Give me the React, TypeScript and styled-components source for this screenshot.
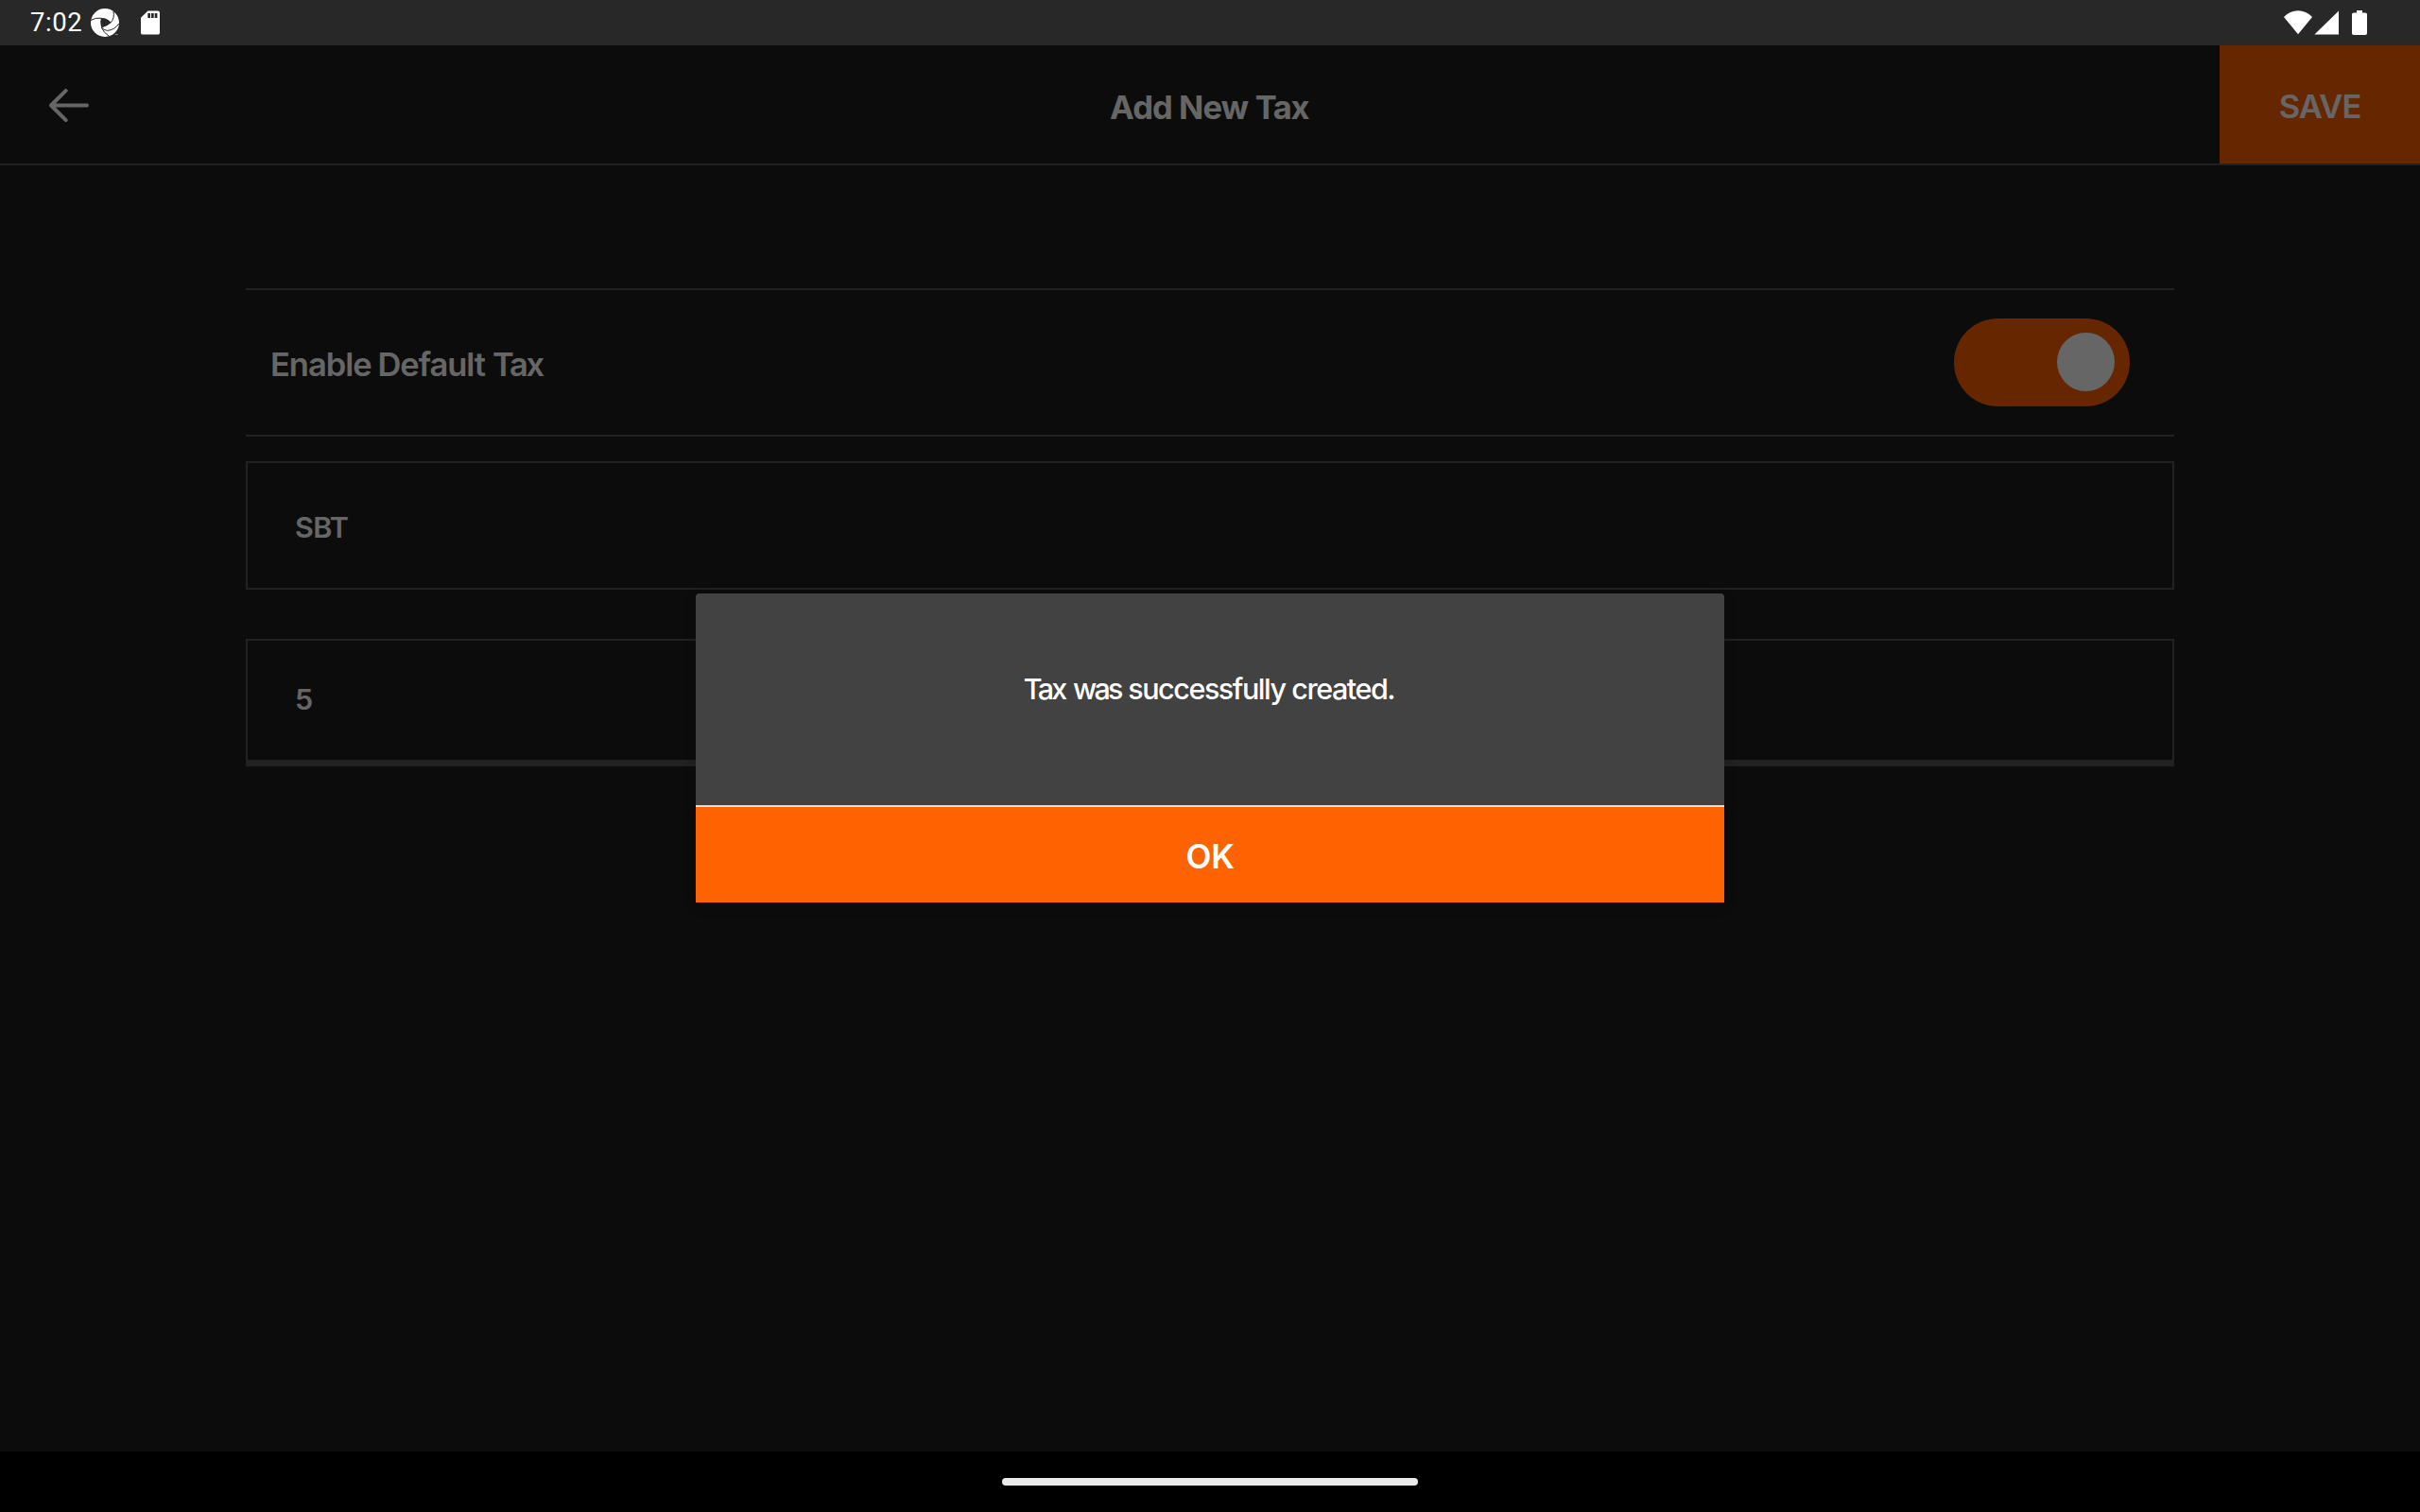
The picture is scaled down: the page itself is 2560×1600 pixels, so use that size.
import React from "react";
import styled, { createGlobalStyle } from "styled-components";

const ORANGE = "#ff6200";
const LINE = "#535353";

const GlobalStyle = createGlobalStyle`
  *, *::before, *::after { box-sizing: border-box; }
  body { margin: 0; background: #000; }
`;

const Device = styled.div`
  display: flex;
  flex-direction: column;
  width: 2560px;
  height: 1600px;
  overflow: hidden;
  background: #000;
  color: #fff;
  font-family: Inter, "Liberation Sans", sans-serif;
`;

const StatusBar = styled.div`
  display: flex;
  flex: none;
  align-items: center;
  justify-content: space-between;
  height: 48px;
  padding: 0 56px 0 32px;
  background: #282828;
`;

const StatusGroup = styled.div`
  display: flex;
  align-items: center;
`;

const Clock = styled.span`
  width: 63px;
  font: 400 27.5px/48px Roboto, sans-serif;
  letter-spacing: 0.6px;
`;

const StatusIcon = styled.svg<{ $gap?: number }>`
  display: block;
  flex: none;
  margin-left: ${(p) => p.$gap ?? 0}px;
`;

const Screen = styled.div`
  position: relative;
  flex: 1;
  display: flex;
  flex-direction: column;
  background: #1e1e1e;
`;

const Header = styled.header`
  display: grid;
  grid-template-columns: 212px 1fr 212px;
  height: 127px;
  border-bottom: 2px solid ${LINE};
`;

const BackButton = styled.button`
  display: flex;
  align-items: center;
  padding: 0 0 0 48px;
  border: 0;
  background: none;
  color: #fff;
`;

/* Words that start with a wide cap or diagonal are set tighter than the rest of the line. */
const Kern = styled.span<{ $spacing: number; $word?: number; $before?: number; $after?: number }>`
  margin-left: ${(p) => p.$before ?? 0}px;
  margin-right: ${(p) => p.$after ?? 0}px;
  letter-spacing: ${(p) => p.$spacing}px;
  word-spacing: ${(p) => p.$word ?? 0}px;
`;

const Title = styled.h1`
  margin: 0;
  padding: 7px 2px 0 0;
  font-size: 34.5px;
  font-weight: 700;
  line-height: 118px;
  letter-spacing: -0.8px;
  word-spacing: -0.5px;
  text-align: center;
`;

const SaveButton = styled.button`
  padding: 4px 0 0;
  border: 0;
  background: ${ORANGE};
  color: #fff;
  font: 600 34.5px/40px Inter, sans-serif;
  letter-spacing: -1px;
`;

const Form = styled.main`
  display: flex;
  flex-direction: column;
  margin: 130px 260px 0;
`;

const ToggleRow = styled.div`
  display: flex;
  align-items: center;
  justify-content: space-between;
  height: 157px;
  padding: 0 47px 0 26px;
  border: solid ${LINE};
  border-width: 2px 0;
`;

const Label = styled.span`
  padding-top: 4px;
  font-size: 34.5px;
  font-weight: 600;
  line-height: 40px;
  letter-spacing: -1.04px;
  word-spacing: -0.7px;
`;

const Toggle = styled.div`
  display: flex;
  align-items: flex-start;
  justify-content: flex-end;
  width: 186px;
  height: 93px;
  padding: 15px 16px 0 0;
  border-radius: 47px;
  background: ${ORANGE};
`;

const Knob = styled.div`
  width: 61px;
  height: 62px;
  border-radius: 50%;
  background: #fff;
`;

const Field = styled.div<{ $focused?: boolean }>`
  display: flex;
  align-items: center;
  height: ${(p) => (p.$focused ? 135 : 136)}px;
  margin-top: ${(p) => (p.$focused ? 52 : 26)}px;
  padding: ${(p) => (p.$focused ? "0 50px 2px" : "4px 50px 0")};
  border: 2px solid ${LINE};
  border-bottom-width: ${(p) => (p.$focused ? 7 : 2)}px;
  font-size: 30.5px;
  font-weight: 600;
  line-height: 40px;
  letter-spacing: -0.7px;
`;

const Scrim = styled.div`
  position: absolute;
  inset: 0;
  display: flex;
  align-items: flex-start;
  justify-content: center;
  padding-top: 580px;
  background: rgba(0, 0, 0, 0.6);
`;

const Dialog = styled.div`
  display: flex;
  flex-direction: column;
  width: 1088px;
  height: 327px;
  overflow: hidden;
  border-radius: 4px 4px 0 0;
  background: #424242;
  box-shadow: 0 4px 16px rgba(0, 0, 0, 0.1);
`;

const Message = styled.p`
  flex: 1;
  margin: 0;
  padding: 81px 2px 0 0;
  font-size: 30.5px;
  font-weight: 500;
  line-height: 40px;
  letter-spacing: -1.45px;
  text-align: center;
`;

const OkButton = styled.button`
  height: 103px;
  padding: 2px 0 0;
  border: 0;
  border-top: 2px solid #dedede;
  background: ${ORANGE};
  color: #fff;
  font: 600 35px/40px Inter, sans-serif;
  letter-spacing: -0.3px;
`;

const NavBar = styled.div`
  display: flex;
  flex: none;
  align-items: center;
  justify-content: center;
  height: 64px;
  background: #000;
`;

const NavPill = styled.div`
  width: 440px;
  height: 8px;
  border-radius: 4px;
  background: #ebebeb;
`;

const ApertureIcon = () => (
  <StatusIcon width="32" height="32" viewBox="0 0 32 32">
    <circle cx="16" cy="16" r="15" fill="#fff" />
    <g fill="none" stroke="#282828" strokeWidth="1">
      <path d="M1 13.4Q6 10.6 12 11.2" />
      <path d="M25 4Q26.5 11 22.3 15.8" />
      <path d="M12.4 21.2Q14.8 27 20.6 30.4" />
      <path d="M30.8 17Q26 23.8 18.6 24.4Q15 24 12.4 21.2" />
    </g>
    <path d="M12 11Q18.4 10.8 22.6 15.9Q18.4 20 12.5 21.4Q10.4 16 12 11Z" fill="#282828" />
    <path d="M26.6 28.4h3.2" stroke="#858585" strokeWidth="1" />
  </StatusIcon>
);

const SdCardIcon = () => (
  <StatusIcon $gap={22} width="20" height="26" viewBox="0 0 20 26">
    <path d="M7.4 0.4H17.8Q20 0.4 20 2.6V23.4Q20 25.6 17.8 25.6H2.2Q0 25.6 0 23.4V7.8Z" fill="#fff" />
    <path d="M7.3 3h2.7v5H7.3zM11 3h2.7v5H11zM14.7 3h2.7v5h-2.7z" fill="#282828" />
  </StatusIcon>
);

const WifiIcon = () => (
  <StatusIcon width="30" height="26" viewBox="0 0 30 26">
    <path d="M15 25.3L0 7Q6.4 0.3 15 0.3T30 7Z" fill="#fff" />
  </StatusIcon>
);

const SignalIcon = () => (
  <StatusIcon $gap={2} width="26" height="26" viewBox="0 0 26 26">
    <path d="M0.4 25.6H26V0.4Z" fill="#fff" />
  </StatusIcon>
);

const BatteryIcon = () => (
  <StatusIcon $gap={14} width="16" height="26" viewBox="0 0 16 26">
    <path
      d="M5 0H11V2.4H14.2Q16 2.4 16 4.2V24.2Q16 26 14.2 26H1.8Q0 26 0 24.2V4.2Q0 2.4 1.8 2.4H5Z"
      fill="#fff"
    />
  </StatusIcon>
);

const BackArrow = () => (
  <svg width="48" height="40" viewBox="0 0 48 40">
    <path
      d="M21.7 4.8L6 20.5L21.7 36.2M6 20.5H44"
      fill="none"
      stroke="currentColor"
      strokeWidth="4"
      strokeLinecap="round"
      strokeLinejoin="round"
    />
  </svg>
);

export default function App() {
  return (
    <Device>
      <GlobalStyle />
      <StatusBar>
        <StatusGroup>
          <Clock>7:02</Clock>
          <ApertureIcon />
          <SdCardIcon />
        </StatusGroup>
        <StatusGroup>
          <WifiIcon />
          <SignalIcon />
          <BatteryIcon />
        </StatusGroup>
      </StatusBar>
      <Screen>
        <Header>
          <BackButton aria-label="Back">
            <BackArrow />
          </BackButton>
          <Title>
            Add New <Kern $spacing={-1.4} $before={0.6}>Tax</Kern>
          </Title>
          <SaveButton>SAVE</SaveButton>
        </Header>
        <Form>
          <ToggleRow>
            <Label>
              Enable Default <Kern $spacing={-2.3} $before={1.1}>Tax</Kern>
            </Label>
            <Toggle role="switch" aria-checked="true">
              <Knob />
            </Toggle>
          </ToggleRow>
          <Field>SBT</Field>
          <Field $focused>5</Field>
        </Form>
        <Scrim>
          <Dialog role="dialog">
            <Message>
              <Kern $spacing={-2.8} $word={3.2} $after={1}>Tax was</Kern> successfully created.
            </Message>
            <OkButton>OK</OkButton>
          </Dialog>
        </Scrim>
      </Screen>
      <NavBar>
        <NavPill />
      </NavBar>
    </Device>
  );
}
